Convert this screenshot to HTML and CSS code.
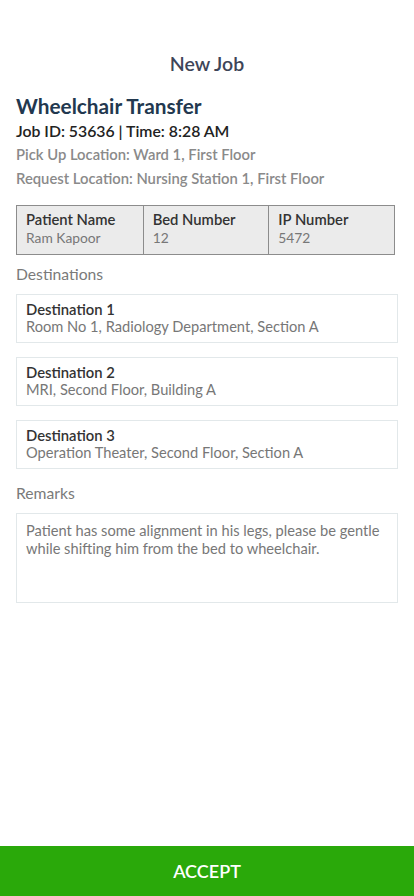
FILE: index.html
```html
<!doctype html>
<html>

<head>
	<title>New Job</title>
	<link rel="stylesheet" href="styles.css">
</head>

<body>
	<div class="screen">
		<div class="header">New Job</div>

		<div class="content">
			<div class="jobTitle">Wheelchair Transfer</div>
			<div class="jobMeta">Job ID: 53636 | Time: 8:28 AM</div>
			<div class="location">Pick Up Location: Ward 1, First Floor</div>
			<div class="location">Request Location: Nursing Station 1, First Floor</div>

			<div class="patientTable">
				<div class="cell">
					<div class="cellLabel">Patient Name</div>
					<div class="cellValue">Ram Kapoor</div>
				</div>
				<div class="cell">
					<div class="cellLabel">Bed Number</div>
					<div class="cellValue">12</div>
				</div>
				<div class="cell">
					<div class="cellLabel">IP Number</div>
					<div class="cellValue">5472</div>
				</div>
			</div>

			<div class="sectionTitle">Destinations</div>
			<div class="destList">
				<div class="destCard">
					<div class="destName">Destination 1</div>
					<div class="destPlace">Room No 1, Radiology Department, Section A</div>
				</div>
				<div class="destCard">
					<div class="destName">Destination 2</div>
					<div class="destPlace">MRI, Second Floor, Building A</div>
				</div>
				<div class="destCard">
					<div class="destName">Destination 3</div>
					<div class="destPlace">Operation Theater, Second Floor, Section A</div>
				</div>
			</div>

			<div class="sectionTitle remarksTitle">Remarks</div>
			<div class="remarks">Patient has some alignment in his legs, please be gentle while shifting him from the bed to wheelchair.</div>
		</div>

		<button class="acceptBtn">ACCEPT</button>
	</div>
</body>

</html>
```

FILE: styles.css
```css
body {
	margin: 0;
	font-family: Lato, "Noto Sans", sans-serif;
	background: #fff;
}

.screen {
	display: flex;
	flex-direction: column;
	width: 414px;
	height: 896px;
}

.header {
	padding-top: 53px;
	text-align: center;
	font-size: 19.5px;
	font-weight: 600;
	color: #3e4558;
	line-height: 22px;
}

.content {
	flex: 1;
	padding: 0 16px;
}

.jobTitle {
	margin-top: 17px;
	font-size: 20.8px;
	font-weight: 700;
	color: #22384f;
	line-height: 27px;
}

.jobMeta {
	font-size: 15.8px;
	font-weight: 600;
	color: #222;
	line-height: 23px;
}

.location {
	margin-top: 1px;
	font-size: 14.8px;
	font-weight: 600;
	color: #8a8a8a;
	line-height: 22.5px;
}

.patientTable {
	display: grid;
	grid-template-columns: 1fr 1fr 1fr;
	width: 379px;
	box-sizing: border-box;
	margin-top: 16px;
	border: 1px solid #8c8c8c;
	background: #ebebeb;
}

.cell {
	padding: 4px 9px 7px;
	border-left: 1px solid #8c8c8c;
}

.cell:first-child {
	border-left: none;
}

.cellLabel {
	font-size: 14.8px;
	font-weight: 600;
	color: #333;
	line-height: 19px;
}

.cellValue {
	font-size: 13.8px;
	color: #777;
	line-height: 18px;
}

.sectionTitle {
	margin-top: 9px;
	font-size: 15.7px;
	color: #7a7a7a;
	line-height: 20px;
}

.destList {
	display: flex;
	flex-direction: column;
	gap: 14px;
	margin-top: 10px;
}

.destCard {
	height: 49px;
	box-sizing: border-box;
	padding: 5px 9px;
	border: 1px solid #e2e8ea;
}

.destName {
	font-size: 14.8px;
	font-weight: 600;
	color: #333;
	line-height: 18px;
}

.destPlace {
	font-size: 14.65px;
	color: #777;
	line-height: 18px;
}

.remarksTitle {
	margin-top: 14px;
}

.remarks {
	height: 90px;
	box-sizing: border-box;
	margin-top: 10px;
	padding: 8px 9px;
	border: 1px solid #e2e8ea;
	font-size: 14.65px;
	color: #777;
	line-height: 18px;
}

.acceptBtn {
	height: 50px;
	border: none;
	background: #2aa90a;
	color: #fff;
	font-family: Lato, "Noto Sans", sans-serif;
	font-size: 18px;
	font-weight: 600;
}
```
